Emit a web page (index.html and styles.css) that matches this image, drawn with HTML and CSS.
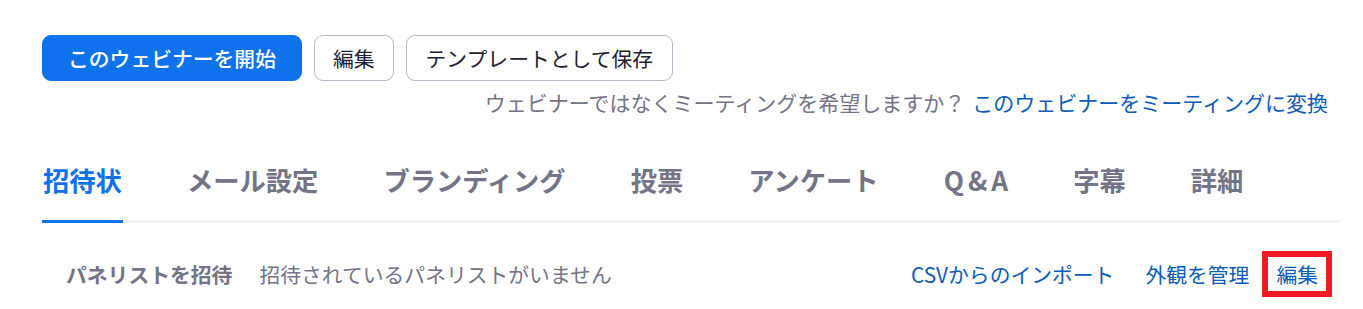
FILE: index.html
```html
<!DOCTYPE html>
<html lang="ja">
<head>
<meta charset="utf-8">
<link rel="stylesheet" href="styles.css">
</head>
<body>
<div class="page">
  <div class="actions">
    <button class="btn btn-primary">このウェビナーを開始</button>
    <button class="btn btn-default btn-edit">編集</button>
    <button class="btn btn-default btn-template">テンプレートとして保存</button>
  </div>
  <div class="convert">
    <span class="convert-q">ウェビナーではなくミーティングを希望しますか？</span>
    <a class="link convert-link">このウェビナーをミーティングに変換</a>
  </div>
  <div class="tabs">
    <div class="tab active">招待状</div>
    <div class="tab">メール設定</div>
    <div class="tab">ブランディング</div>
    <div class="tab">投票</div>
    <div class="tab">アンケート</div>
    <div class="tab tab-qa">Q&amp;A</div>
    <div class="tab">字幕</div>
    <div class="tab">詳細</div>
  </div>
  <div class="panel-row">
    <div class="panel-left">
      <span class="panel-label">パネリストを招待</span>
      <span class="panel-empty">招待されているパネリストがいません</span>
    </div>
    <div class="panel-right">
      <a class="link">CSVからのインポート</a>
      <a class="link">外観を管理</a>
      <a class="link highlight">編集</a>
    </div>
  </div>
</div>
</body>
</html>
```
FILE: styles.css
```css
* { box-sizing: border-box; }
body {
  margin: 0;
  background: #ffffff;
  font-family: "Noto Sans CJK JP", "Noto Sans", sans-serif;
  color: #222230;
}
.page {
  padding: 35px 23px 0 42px;
}
.actions {
  display: flex;
  gap: 12px;
}
.btn {
  font-family: inherit;
  font-size: 20.8px;
  height: 46px;
  line-height: 44px;
  border-radius: 9px;
  padding: 0 18px;
  cursor: pointer;
}
.btn-primary {
  background: #0e72ed;
  border: 1px solid #0e72ed;
  color: #ffffff;
  font-weight: 500;
  padding: 0 25px;
}
.btn-default {
  background: #ffffff;
  border: 1px solid #babacc;
  color: #222230;
}
.btn-template { padding: 0 19px; }
.convert {
  display: flex;
  justify-content: flex-end;
  gap: 7px;
  padding-right: 12px;
  margin-top: 8px;
  font-size: 21px;
  line-height: 26px;
}
.convert-q { color: #747487; }
.link {
  color: #0d5cba;
  text-decoration: none;
}
.tabs {
  display: flex;
  gap: 63px;
  margin-top: 47px;
  border-bottom: 3px solid #f3f3f5;
}
.tab {
  font-size: 26.3px;
  font-weight: 700;
  line-height: 36px;
  color: #747487;
  padding: 0 1px 22px 1px;
  border-bottom: 3px solid transparent;
  margin-bottom: -3px;
}
.tab-qa {
  letter-spacing: 4px;
  padding-right: 0;
  margin-right: -3px;
}
.tab.active {
  color: #0e72ed;
  border-bottom-color: #0e72ed;
}
.panel-row {
  display: flex;
  justify-content: space-between;
  align-items: center;
  margin-top: 28px;
  padding: 0 8px 0 24px;
  font-size: 20.8px;
}
.panel-left {
  display: flex;
  gap: 27px;
  align-items: center;
}
.panel-label {
  font-weight: 700;
  color: #747487;
}
.panel-empty { color: #747487; }
.panel-right {
  display: flex;
  align-items: center;
  gap: 31px;
}
.highlight {
  border: 6px solid #ed1c24;
  line-height: 34px;
  padding: 0 8px;
  margin-left: -18px;
}
```
